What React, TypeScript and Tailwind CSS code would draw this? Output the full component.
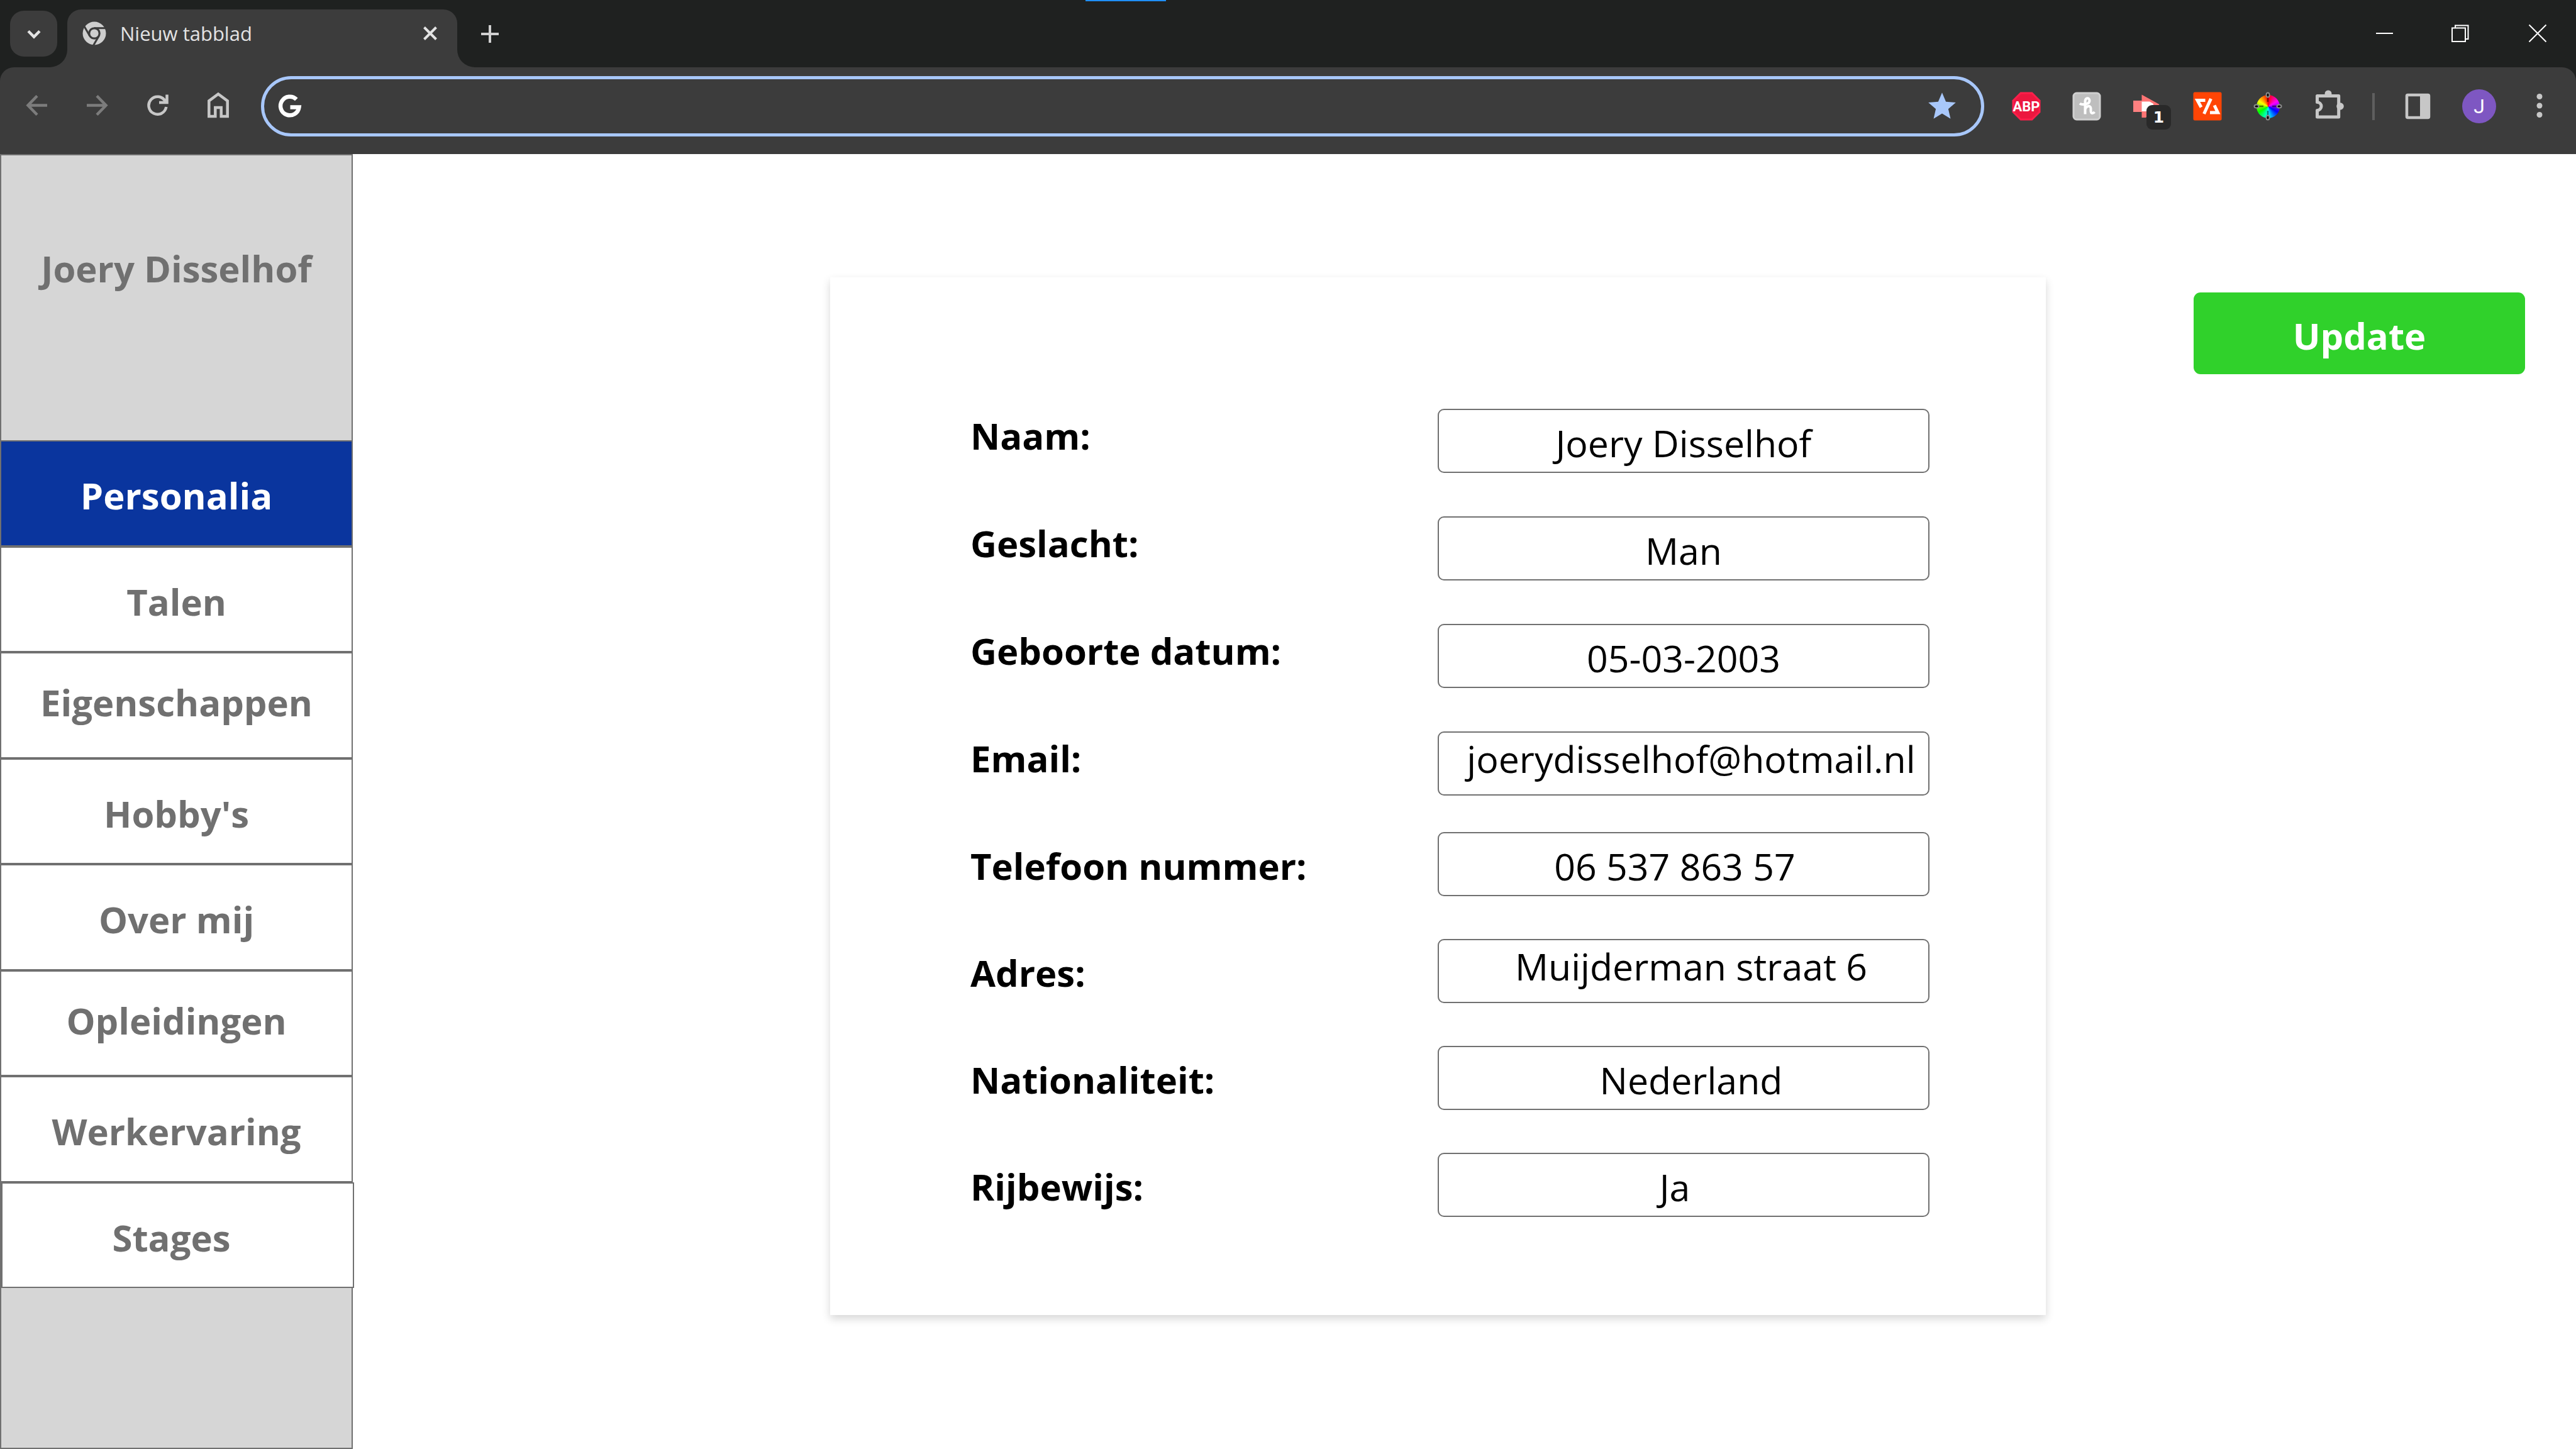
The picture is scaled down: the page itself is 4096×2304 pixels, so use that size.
import type { ReactNode } from "react";

type NavItem = { label: string; active?: boolean; raised?: boolean; wide?: boolean };

const NAV: NavItem[] = [
  { label: "Personalia", active: true },
  { label: "Talen" },
  { label: "Eigenschappen", raised: true },
  { label: "Hobby's" },
  { label: "Over mij" },
  { label: "Opleidingen", raised: true },
  { label: "Werkervaring" },
  { label: "Stages", wide: true },
];

type FieldData = {
  id: string;
  label: string;
  value: string;
  raised?: boolean;
  lean?: "left" | "right";
};

const FIELDS_TOP: FieldData[] = [
  { id: "naam", label: "Naam:", value: "Joery Disselhof" },
  { id: "geslacht", label: "Geslacht:", value: "Man" },
  { id: "geboortedatum", label: "Geboorte datum:", value: "05-03-2003" },
  { id: "email", label: "Email:", value: "joerydisselhof@hotmail.nl", raised: true, lean: "right" },
];

const FIELDS_BOTTOM: FieldData[] = [
  { id: "telefoon", label: "Telefoon nummer:", value: "06 537 863 57", lean: "left" },
  { id: "adres", label: "Adres:", value: "Muijderman straat 6", raised: true, lean: "right" },
  { id: "nationaliteit", label: "Nationaliteit:", value: "Nederland", lean: "right" },
  { id: "rijbewijs", label: "Rijbewijs:", value: "Ja", lean: "left" },
];

function Icon({ children, className = "" }: { children: ReactNode; className?: string }) {
  return (
    <svg
      viewBox="0 0 48 48"
      fill="none"
      stroke="currentColor"
      strokeWidth="4.5"
      aria-hidden="true"
      className={"size-12 shrink-0 overflow-visible " + className}
    >
      {children}
    </svg>
  );
}

function ToolButton({ label, children, className = "" }: { label: string; children: ReactNode; className?: string }) {
  return (
    <button
      type="button"
      aria-label={label}
      className={"relative flex h-24 w-24 shrink-0 items-center justify-center text-[#c7c7c7] " + className}
    >
      {children}
    </button>
  );
}

function TabStrip() {
  return (
    <div className="relative flex h-[107px] items-start bg-[#1f2120] pl-4">
      <div className="absolute top-0 left-[1726px] h-[2px] w-32 bg-[#1f8fff]" />
      <button
        type="button"
        aria-label="Tabbladen zoeken"
        className="mt-[17px] flex h-[73px] w-[75px] items-center justify-center rounded-[22px] bg-[#3c3c3c] text-[#e3e3e3]"
      >
        <Icon>
          <path d="M15 19.5l9 9 9-9" />
        </Icon>
      </button>
      <div className="relative mt-[15px] ml-4 flex h-[92px] w-[620px] items-center rounded-t-[22px] bg-[#3c3c3c] pr-[22px] pb-4 pl-6">
        <svg viewBox="0 0 28 28" className="absolute bottom-0 -left-7 size-7" aria-hidden="true">
          <path d="M28 0V28H0A28 28 0 0 0 28 0Z" fill="#3c3c3c" />
        </svg>
        <svg viewBox="0 0 28 28" className="absolute -right-7 bottom-0 size-7" aria-hidden="true">
          <path d="M0 0V28H28A28 28 0 0 1 0 0Z" fill="#3c3c3c" />
        </svg>
        <svg viewBox="0 0 38 38" className="size-[38px] shrink-0" aria-hidden="true">
          <circle cx="19" cy="19" r="18.5" fill="#cfcfcf" />
          <circle cx="19" cy="19" r="9.8" fill="#3c3c3c" />
          <g stroke="#3c3c3c" strokeWidth="3">
            <path d="M19 10.7H38" />
            <path d="M19 10.7H38" transform="rotate(120 19 19)" />
            <path d="M19 10.7H38" transform="rotate(240 19 19)" />
          </g>
          <circle cx="19" cy="19" r="6.6" fill="#cfcfcf" />
        </svg>
        <span className="ml-[22px] flex-1 text-[31px] leading-10 text-[#e3e3e3]">Nieuw tabblad</span>
        <button type="button" aria-label="Tabblad sluiten" className="flex w-[42px] items-center justify-center text-[#e3e3e3]">
          <Icon>
            <path d="M14.5 14.5l19 19M33.5 14.5l-19 19" strokeWidth="4" />
          </Icon>
        </button>
      </div>
      <button type="button" aria-label="Nieuw tabblad" className="mt-[17px] ml-[14px] flex h-[73px] w-[75px] items-center justify-center text-[#d0d0d0]">
        <Icon>
          <path d="M24 10v28M10 24h28" strokeWidth="4" />
        </Icon>
      </button>
      <div className="ml-auto flex h-[105px] text-white">
        <button type="button" aria-label="Minimaliseren" className="flex w-[122px] items-center justify-center">
          <Icon>
            <path d="M11 24h27" strokeWidth="2" />
          </Icon>
        </button>
        <button type="button" aria-label="Verkleinen" className="flex w-[122px] items-center justify-center">
          <Icon>
            <path d="M10 15.5h21v21.5h-21zM15 15.5V11.5h20.500v21.500H31" strokeWidth="2" />
          </Icon>
        </button>
        <button type="button" aria-label="Sluiten" className="flex w-[122px] items-center justify-center">
          <Icon>
            <path d="M10.500 10.500l27 27M37.500 10.500l-27 27" strokeWidth="2" />
          </Icon>
        </button>
      </div>
    </div>
  );
}

function Toolbar() {
  return (
    <div className="bg-[#1f2120]">
      <div className="flex h-[138px] items-center rounded-t-[22px] bg-[#3c3c3c] px-[10px] pb-[14px]">
        <ToolButton label="Terug">
          <Icon className="text-[#7c7c7c]">
            <path d="M41 22.500H11M25 7.500L10.500 22.500L25 37.500" />
          </Icon>
        </ToolButton>
        <ToolButton label="Vooruit">
          <Icon className="text-[#7c7c7c]">
            <path d="M8 22.500H38M24 7.500L38.500 22.500L24 37.500" />
          </Icon>
        </ToolButton>
        <ToolButton label="Vernieuwen">
          <Icon>
            <path d="M38.300 25A14 14 0 1 1 36.500 15.500" />
            <path d="M39.500 5.500V18H27" />
            <path d="M32 18L39 11V18Z" fill="currentColor" stroke="none" />
          </Icon>
        </ToolButton>
        <ToolButton label="Startpagina">
          <Icon>
            <path d="M10.300 40V15.500L25 4.500L39.700 15.500V40H29.700V26H20.300V40Z" />
          </Icon>
        </ToolButton>
        <label className="ml-[21px] flex h-24 flex-1 items-center rounded-full border-[5px] border-[#a8c7fa] pr-[38px] pl-[17px]">
          <Icon className="text-white">
            <path d="M34.300 13A14.800 14.800 0 1 0 38.500 25.500H24.500" strokeWidth="6.500" />
          </Icon>
          <input
            type="text"
            aria-label="Adresbalk"
            className="h-full min-w-0 flex-1 bg-transparent px-6 text-[31px] text-white outline-none"
          />
          <svg viewBox="1 1 22 22" className="size-12 text-[#a8c7fa]" fill="currentColor" aria-hidden="true">
            <path d="M12 17.270L18.180 21l-1.640-7.030L22 9.240l-7.190-.610L12 2 9.190 8.630 2 9.240l5.460 4.730L5.820 21z" />
          </svg>
        </label>
        <ToolButton label="Adblock Plus" className="ml-[19px]">
          <Icon>
            <path d="M14.500 1.500h19l13 13v19l-13 13h-19l-13-13v-19z" fill="#ff1f4b" stroke="none" />
            <path d="M15.500 4.500h17l11 11v17l-11 11h-17l-11-11v-17z" fill="#ec173f" stroke="none" />
            <text
              x="24"
              y="32"
              textAnchor="middle"
              fill="#ffffff"
              stroke="none"
              className="font-[Roboto,sans-serif] text-[22px] font-bold"
            >
              ABP
            </text>
          </Icon>
        </ToolButton>
        <ToolButton label="Honey">
          <Icon>
            <rect x="3" y="3" width="42" height="42" rx="5" fill="#bebebe" stroke="#cfcfcf" strokeWidth="3" />
            <path
              d="M13 19.500C16 22.500 20 21 24 20C28 19 28.500 16.500 28.500 15C28.500 10 21.500 9.500 21.500 17V36.500M21.500 29C23 23 30 22 30.500 27V31C30.500 36 34 36 36.500 33"
              stroke="#ffffff"
              strokeWidth="4"
            />
          </Icon>
        </ToolButton>
        <ToolButton label="Extensie met 1 melding">
          <Icon>
            <g stroke="none">
              <path d="M2 15h14v18H2z" fill="#ff8080" />
              <path d="M15.500 5.500L43.500 21L22 42H15.500Z" fill="#ff7474" />
              <path d="M15.500 16.500H28L34 20V32H15.500Z" fill="#ffffff" />
            </g>
          </Icon>
          <span className="absolute top-[46px] left-[47px] flex size-[39px] items-center justify-center rounded-[9px] bg-[#292929] font-['DejaVu_Sans',sans-serif] text-[25px] leading-none font-bold text-white">
            1
          </span>
        </ToolButton>
        <ToolButton label="Ontwikkelaarsextensie">
          <Icon>
            <rect x="1.500" y="1.500" width="45" height="45" rx="2.500" fill="#ff4505" stroke="none" />
            <path
              d="M29.500 12L18.500 36M20.500 14.500H8L14 25.500M35 22.500L40.500 34H28"
              stroke="#ffffff"
              strokeWidth="5"
            />
          </Icon>
        </ToolButton>
        <ToolButton label="Kleurenkiezer">
          <span className="grid place-items-center">
            <span className="col-start-1 row-start-1 size-[37px] rounded-full bg-[conic-gradient(#ff0000,#ff00ff,#0000ff,#00ffff,#00ff00,#ffff00,#ff0000)]" />
            <Icon className="col-start-1 row-start-1">
              <path d="M24 9v8M24 31v8M9 24h8M31 24h8" stroke="#000000" strokeOpacity=".5" strokeWidth="2.500" />
              <g fill="#000000" stroke="#8c8c8c" strokeWidth="2">
                <ellipse cx="24" cy="6" rx="2.500" ry="3.500" />
                <ellipse cx="24" cy="42" rx="2.500" ry="3.500" />
                <ellipse cx="6" cy="24" rx="3.500" ry="2.500" />
                <ellipse cx="42" cy="24" rx="3.500" ry="2.500" />
              </g>
            </Icon>
          </span>
        </ToolButton>
        <ToolButton label="Extensies">
          <Icon>
            <path d="M6.500 7.500H40.700V41H6.500V30.500A6.500 6.500 0 0 0 6.500 17.500Z" strokeWidth="5" strokeLinejoin="round" />
            <circle cx="24" cy="4" r="5.500" fill="currentColor" stroke="none" />
            <circle cx="43" cy="24" r="5.800" fill="currentColor" stroke="none" />
          </Icon>
        </ToolButton>
        <div className="flex w-12 shrink-0 justify-center">
          <div className="h-[43px] w-1 bg-[#5f5f5f]" />
        </div>
        <ToolButton label="Zijpaneel">
          <Icon>
            <rect x="5" y="6" width="35" height="36" rx="1.500" />
            <path d="M26 5h15v38H26z" fill="currentColor" stroke="none" />
          </Icon>
        </ToolButton>
        <ToolButton label="Profiel">
          <span className="flex size-[54px] items-center justify-center rounded-full bg-[#7e57c2] font-[Roboto,sans-serif] text-[32px] leading-none text-white">
            J
          </span>
        </ToolButton>
        <ToolButton label="Menu">
          <Icon>
            <g fill="currentColor" stroke="none">
              <circle cx="24" cy="8.500" r="4.500" />
              <circle cx="24" cy="23" r="4.500" />
              <circle cx="24" cy="37.500" r="4.500" />
            </g>
          </Icon>
        </ToolButton>
      </div>
    </div>
  );
}

function Sidebar() {
  return (
    <aside className="flex w-[561px] shrink-0 flex-col border-2 border-[#707070] bg-[#d6d6d6] text-[58px] leading-none font-bold text-[#707070]">
      <h1 className="h-[453px] pt-[151px] text-center">Joery Disselhof</h1>
      <nav className="-mx-[2px] grid h-[1348px] auto-rows-fr">
        {NAV.map((item) => (
          <a
            key={item.label}
            href={"#" + item.label.toLowerCase().replace(/[^a-z]/g, "")}
            aria-current={item.active ? "page" : undefined}
            className={
              "flex items-center justify-center border-2 border-[#707070] " +
              (item.active ? "bg-[#0a359e] text-white " : "bg-white ") +
              (item.raised ? "pb-2 " : "pt-2 ") +
              (item.wide ? "-mr-[2px] border-l-4 pr-5" : "")
            }
          >
            {item.label}
          </a>
        ))}
      </nav>
    </aside>
  );
}

function FieldGroup({ fields, className }: { fields: FieldData[]; className: string }) {
  return (
    <div className={"flex flex-col " + className}>
      {fields.map((field) => (
        <div key={field.id} className="flex h-[102px]">
          <label htmlFor={field.id} className="flex flex-1 items-center text-[58px] font-bold">
            {field.label}
          </label>
          <input
            id={field.id}
            type="text"
            defaultValue={field.value}
            className={
              "w-[782px] rounded-[10px] border-2 border-[#707070] bg-white text-center text-[59px] outline-none " +
              (field.raised ? "pb-4 " : "pt-[6px] ") +
              (field.lean === "right" ? "pl-6" : field.lean === "left" ? "pr-7" : "")
            }
          />
        </div>
      ))}
    </div>
  );
}

export default function App() {
  return (
    <div className="flex min-h-screen flex-col bg-white font-['Open_Sans','Noto_Sans',sans-serif]">
      <header>
        <TabStrip />
        <Toolbar />
      </header>
      <div className="flex flex-1">
        <Sidebar />
        <main className="flex flex-1 items-start pr-[81px] pl-[759px]">
          <form className="mt-[196px] flex flex-1 flex-col gap-[58px] bg-white pt-[209px] pr-[185px] pb-[156px] pl-[223px] leading-none text-black shadow-[0_6px_13px_rgba(0,0,0,0.16)]">
            <FieldGroup fields={FIELDS_TOP} className="gap-[69px] [&_label]:pb-4" />
            <FieldGroup fields={FIELDS_BOTTOM} className="gap-[68px] [&_label]:pt-[6px]" />
          </form>
          <button
            type="button"
            className="mt-[220px] ml-[235px] flex h-[130px] w-[527px] items-center justify-center rounded-[11px] bg-[#30d12b] pt-2 text-[58px] leading-none font-bold text-white"
          >
            Update
          </button>
        </main>
      </div>
    </div>
  );
}
